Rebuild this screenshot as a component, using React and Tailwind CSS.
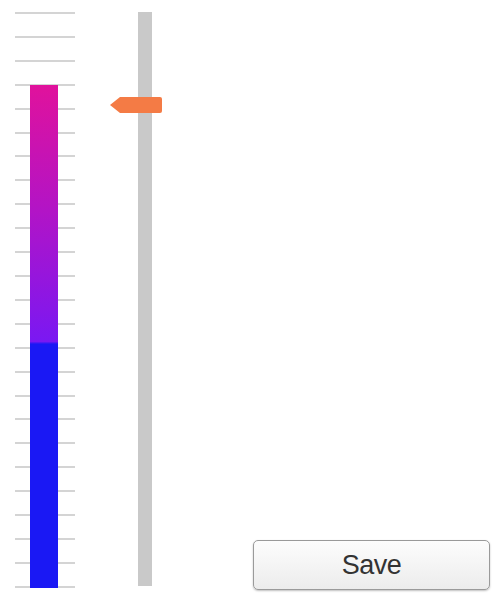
import React from 'react';

const ticks = Array.from({ length: 25 }, (_, i) => i);

export default function App() {
    return (
        <div className="w-[495px] h-[595px] bg-white flex font-['Liberation_Sans',Arial,sans-serif]">
            {/* Thermometer */}
            <div className="relative ml-[15px] mt-[12px] w-[60px] h-[576px]">
                <div className="flex flex-col justify-between h-full">
                    {ticks.map((t) => (
                        <div key={t} className="h-[2px] bg-[#d4d4d4]" />
                    ))}
                </div>
                <div className="absolute left-[15px] w-[28px] top-[73px] bottom-0 bg-[linear-gradient(to_bottom,#e0129c_0%,#b214c6_25%,#7a18f2_51%,#1a18f4_51.5%,#1a18f4_100%)]" />
            </div>

            {/* Slider */}
            <div className="relative ml-[63px] mt-[12px] w-[14px] h-[574px] bg-[#c9c9c9]">
                <div className="absolute left-[-28px] top-[85px] flex items-center">
                    <div className="w-0 h-0 border-y-[8px] border-y-transparent border-r-[10px] border-r-[#f47b45]" />
                    <div className="w-[42px] h-[16px] bg-[#f47b45] rounded-r-[2px]" />
                </div>
            </div>

            {/* Save button */}
            <div className="flex-1 flex items-end justify-end pr-[5px] pb-[5px]">
                <button className="w-[237px] h-[50px] rounded-[5px] border border-[#9a9a9a] bg-[linear-gradient(to_bottom,#fdfdfd,#ececec)] shadow-[0_1px_2px_rgba(0,0,0,0.25)] text-[27px] leading-none text-[#333] tracking-[-0.5px]">
                    Save
                </button>
            </div>
        </div>
    );
}
